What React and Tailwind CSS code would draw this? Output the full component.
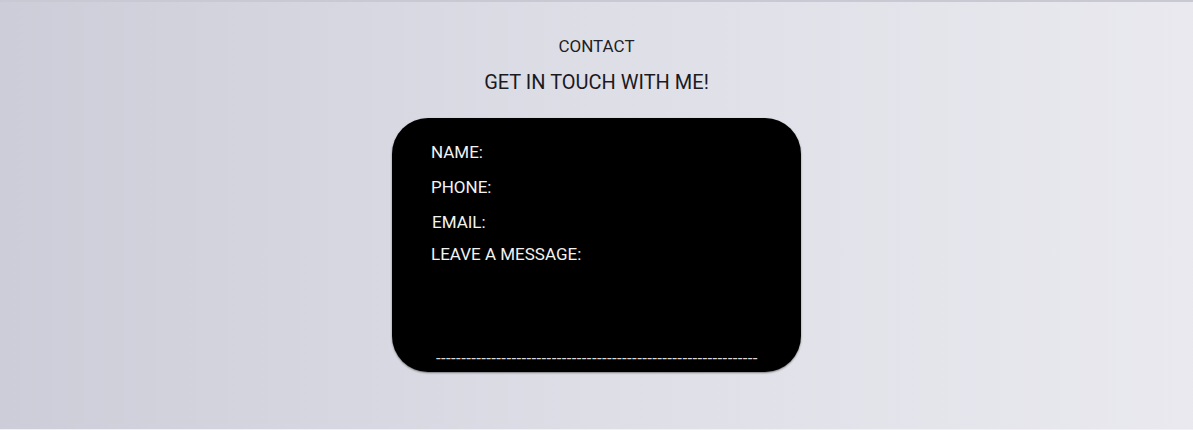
import React from "react";

const fields = [
  { label: "NAME:", cls: "" },
  { label: "PHONE:", cls: "mt-[15px]" },
  { label: "EMAIL:", cls: "mt-[15px] ml-px" },
  { label: "LEAVE A MESSAGE:", cls: "mt-[12px]" },
];

const Contact = () => {
  return (
    <section
      className="w-full h-[430px] flex flex-col items-center border-t-2 border-[#c9c9d3] border-b border-b-[#f1f1f5]
                 bg-gradient-to-r from-[#cdcdd9] via-[#dedee7] to-[#e9e9ef]"
      style={{ fontFamily: "Roboto, 'Liberation Sans', sans-serif" }}
    >
      <h2 className="mt-[34px] text-[17px] leading-[20px] font-normal text-[#1f1f24]">
        CONTACT
      </h2>
      <h1 className="mt-[14px] text-[20px] leading-[24px] font-normal text-[#1a1a1f]">
        GET IN TOUCH WITH ME!
      </h1>

      {/* form card */}
      <div className="mt-[24px] w-[409px] h-[254px] rounded-[36px] bg-black shadow-[0_1px_2px_rgba(0,0,0,0.45)] flex flex-col pl-[39px] pt-[24px] pb-[4px]">
        {fields.map((f) => (
          <div
            key={f.label}
            className={`text-[17px] leading-[20px] text-[#f2f2f2] ${f.cls}`}
          >
            {f.label}
          </div>
        ))}

        {/* message line */}
        <div className="mt-auto ml-[5px] whitespace-nowrap text-[17px] leading-[20px] tracking-[0.33px] text-[#d9d9d9]">
          {"-".repeat(64)}
        </div>
      </div>
    </section>
  );
};

export default function App() {
  return <Contact />;
}
